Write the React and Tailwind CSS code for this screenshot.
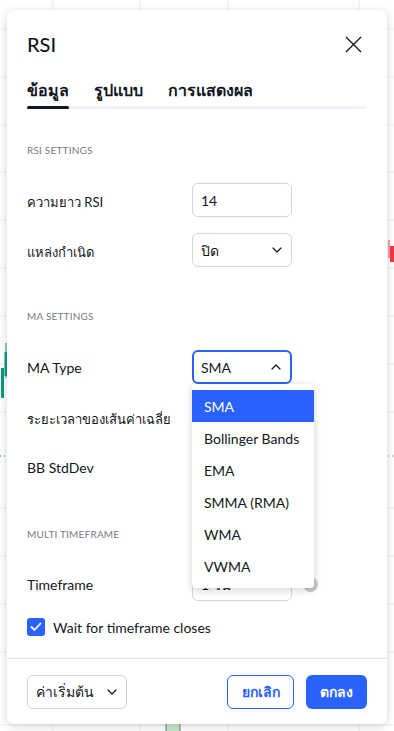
import React, { useState } from "react";

const font = { fontFamily: 'Lato, "Noto Sans", "Liberation Sans", sans-serif' };

function Chevron({ up = false }) {
  return (
    <svg width="10" height="6" viewBox="0 0 10 6" className="shrink-0">
      <path
        d={up ? "M1 5l4-4 4 4" : "M1 1l4 4 4-4"}
        fill="none"
        stroke="#131722"
        strokeWidth="1.2"
        strokeLinecap="round"
        strokeLinejoin="round"
      />
    </svg>
  );
}

function ChartBackground() {
  // พื้นหลังกราฟด้านหลัง dialog
  const hLines = [29, 77, 125, 172, 220, 268, 316, 364, 412, 508, 556, 604, 652, 725];
  const vLines = [53, 140, 228, 359];
  return (
    <svg className="absolute inset-0" width="394" height="731">
      {hLines.map((y) => (
        <line key={"h" + y} x1="0" x2="394" y1={y} y2={y} stroke="#eceef2" strokeWidth="1" />
      ))}
      {vLines.map((x) => (
        <line key={"v" + x} x1={x} x2={x} y1="0" y2="731" stroke="#eceef2" strokeWidth="1" />
      ))}
      <line x1="0" x2="394" y1="456" y2="456" stroke="#089981" strokeWidth="1" strokeDasharray="1 3" />
      <line x1="6" x2="6" y1="343" y2="378" stroke="#089981" strokeWidth="1" />
      <rect x="4.5" y="352" width="3" height="24" fill="#089981" />
      <rect x="1" y="368" width="3" height="30" fill="#089981" />
      <line x1="389" x2="389" y1="240" y2="258" stroke="#f23645" strokeWidth="1" />
      <rect x="390" y="246" width="4" height="16" fill="#f23645" />
      <rect x="166" y="722" width="14" height="12" fill="#c8e6c9" stroke="#787b86" strokeWidth="1" />
    </svg>
  );
}

function Field({ label, thai = false, children }) {
  return (
    <div className="grid grid-cols-[165px_100px] items-center">
      <span className={`${thai ? "text-[13px] pt-[6px]" : "text-[14px]"} text-[#131722]`}>{label}</span>
      {children}
    </div>
  );
}

function Box({ children, active = false, className = "" }) {
  return (
    <div
      className={`h-[34px] rounded-[6px] flex items-center justify-between pl-2 pr-[9px] text-[14px] text-[#131722] bg-white ${
        active ? "border-2 border-[#2962ff] pl-[7px] pr-2" : "border border-[#d1d4dc]"
      } ${className}`}
    >
      {children}
    </div>
  );
}

function SectionTitle({ children }) {
  return <div className="h-4 flex items-center text-[10px] uppercase text-[#787b86] tracking-[0.2px]">{children}</div>;
}

export default function App() {
  const [tab] = useState(0);
  const options = ["SMA", "Bollinger Bands", "EMA", "SMMA (RMA)", "WMA", "VWMA"];

  return (
    <div className="relative w-[394px] h-[731px] overflow-hidden bg-white" style={font}>
      <ChartBackground />

      <div className="relative pt-[10px] pl-[7px]">
        <div className="w-[380px] h-[714px] bg-white rounded-[7px] shadow-[0_2px_10px_rgba(0,0,0,0.16)] flex flex-col">
          {/* header */}
          <div className="pt-5 px-5">
            <div className="h-7 flex items-center justify-between">
              <h1 className="text-[20px] font-medium text-[#131722]">RSI</h1>
              <svg width="17" height="17" viewBox="0 0 17 17" className="mr-[5px]">
                <path d="M1 1l15 15M16 1L1 16" stroke="#131722" strokeWidth="1.4" />
              </svg>
            </div>
            <div className="mt-5 flex gap-[25px] h-6 items-center text-[16px] font-semibold text-[#131722]">
              <span>ข้อมูล</span>
              <span>รูปแบบ</span>
              <span>การแสดงผล</span>
            </div>
            <div className="mt-[4px] h-[3px] rounded-full bg-[#f0f3fa]">
              <div className={`h-[3px] w-[42px] rounded-full bg-[#131722] ${tab === 0 ? "" : "hidden"}`}></div>
            </div>
          </div>

          {/* body */}
          <div className="flex-1 px-5 pt-[33px]">
            <SectionTitle>RSI Settings</SectionTitle>
            <div className="mt-[25px] flex flex-col gap-4">
              <Field label="ความยาว RSI" thai>
                <Box>14</Box>
              </Field>
              <Field label="แหล่งกำเนิด" thai>
                <Box>
                  <span>ปิด</span>
                  <Chevron />
                </Box>
              </Field>
            </div>

            <div className="mt-[41px]">
              <SectionTitle>MA Settings</SectionTitle>
            </div>
            <div className="mt-[26px] flex flex-col gap-4">
              <Field label="MA Type">
                <div className="relative">
                  <Box active>
                    <span>SMA</span>
                    <Chevron up />
                  </Box>
                  <div className="absolute z-10 left-0 top-[34px] w-[122px] py-[6px] bg-white rounded-[4px] shadow-[0_2px_8px_rgba(0,0,0,0.18)]">
                    {options.map((o, i) => (
                      <div
                        key={o}
                        className={`h-8 flex items-center pl-3 text-[14px] ${
                          i === 0 ? "bg-[#2962ff] text-white" : "text-[#131722]"
                        }`}
                      >
                        {o}
                      </div>
                    ))}
                  </div>
                </div>
              </Field>
              <Field label="ระยะเวลาของเส้นค่าเฉลี่ย" thai>
                <Box />
              </Field>
              <Field label="BB StdDev">
                <Box />
              </Field>
            </div>

            <div className="mt-[42px]">
              <SectionTitle>Multi timeframe</SectionTitle>
            </div>
            <div className="mt-[25px] relative">
              <Field label="Timeframe">
                <Box>
                  <span>1 วัน</span>
                  <Chevron />
                </Box>
              </Field>
              <div className="absolute left-[276px] top-[10px] w-[15px] h-[15px] rounded-full bg-[#c9cbd1]"></div>
            </div>

            <label className="mt-[17px] flex items-center gap-2 h-[18px]">
              <span className="w-[18px] h-[18px] rounded-[3px] bg-[#2962ff] flex items-center justify-center">
                <svg width="12" height="10" viewBox="0 0 12 10">
                  <path d="M1.5 5l3 3 6-6.5" fill="none" stroke="white" strokeWidth="1.8" strokeLinecap="round" strokeLinejoin="round" />
                </svg>
              </span>
              <span className="text-[14px] text-[#131722]">Wait for timeframe closes</span>
            </label>
          </div>

          {/* footer */}
          <div className="h-[66px] border-t border-[#e0e3eb] px-5 flex items-center justify-between">
            <div className="w-[100px]">
              <Box>
                <span>ค่าเริ่มต้น</span>
                <Chevron />
              </Box>
            </div>
            <div className="flex gap-3">
              <button className="h-[34px] w-[67px] rounded-[6px] border border-[#2962ff] text-[14px] font-semibold text-[#2962ff]">
                ยกเลิก
              </button>
              <button className="h-[34px] w-[61px] rounded-[6px] bg-[#2962ff] text-[14px] font-semibold text-white">
                ตกลง
              </button>
            </div>
          </div>
        </div>
      </div>
    </div>
  );
}
